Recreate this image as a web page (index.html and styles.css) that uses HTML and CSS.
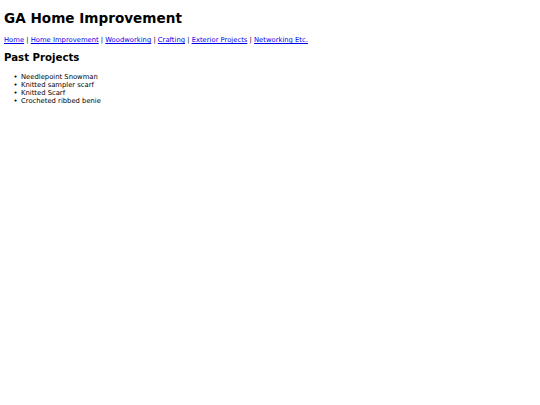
FILE: index.html
```html
<!DOCTYPE html>
<html>
<head>
    <title>GA Home Improvement</title>
    <link rel="stylesheet" href="styles.css">
</head>
<body>
    <h1>GA Home Improvement</h1>

    <p class="nav">
        <a href="#">Home</a> |
        <a href="#">Home Improvement</a> |
        <a href="#">Woodworking</a> |
        <a href="#">Crafting</a> |
        <a href="#">Exterior Projects</a> |
        <a href="#">Networking Etc.</a>
    </p>

    <h2>Past Projects</h2>
    <ul class="projects">
        <li>Needlepoint Snowman</li>
        <li>Knitted sampler scarf</li>
        <li>Knitted Scarf</li>
        <li>Crocheted ribbed benie</li>
    </ul>
</body>
</html>
```
FILE: styles.css
```css
body {
    font-family: "DejaVu Sans", Verdana, sans-serif;
    font-size: 6.8px;
    margin: 4px;
    color: #000;
}
h1 {
    font-size: 13.6px;
    margin: 6px 0 9px;
}
h2 {
    font-size: 10.2px;
    margin: 8px 0 9px;
}
.nav {
    margin: 10px 0 6px;
}
.nav a {
    color: #0000ee;
}
.projects {
    margin: 10px 0;
    padding-left: 17px;
}
.projects li::marker {
    content: "\2022\2002";
}
```
